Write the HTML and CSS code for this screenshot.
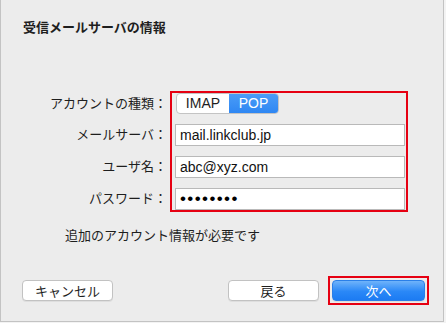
FILE: index.html
```html
<!DOCTYPE html>
<html lang="ja">
<head>
  <meta charset="UTF-8">
  <meta name="viewport" content="width=device-width, initial-scale=1.0">
  <title>受信メールサーバの情報</title>
  <link rel="stylesheet" href="styles.css">
</head>
<body>
  <div class="sheet">
    <h1 class="title">受信メールサーバの情報</h1>

    <div class="form">
      <div class="labels">
        <span class="label label--seg">アカウントの種類：</span>
        <span class="label">メールサーバ：</span>
        <span class="label">ユーザ名：</span>
        <span class="label">パスワード：</span>
      </div>
      <div class="fields">
        <div class="seg">
          <button class="seg__btn">IMAP</button>
          <button class="seg__btn seg__btn--on">POP</button>
        </div>
        <input class="field" type="text" value="mail.linkclub.jp" readonly>
        <input class="field" type="text" value="abc@xyz.com" readonly>
        <input class="field field--pw" type="text" value="••••••••" readonly>
      </div>
    </div>

    <p class="note">追加のアカウント情報が必要です</p>

    <div class="footer">
      <button class="btn">キャンセル</button>
      <button class="btn btn--back">戻る</button>
      <div class="mark">
        <button class="btn btn--primary">次へ</button>
      </div>
    </div>
  </div>
</body>
</html>
```

FILE: styles.css
```css
* { padding:0; margin:0; box-sizing:border-box; font-family:"Liberation Sans", "Noto Sans CJK JP", sans-serif; }

:root {
  --color-bg: #ececec;
  --color-line: #c3c3c3;
  --color-text: #1e1e1e;
  --color-red: #e60012;
  --color-blue: #3d93f5;
  --color-field-line: #b9b9b9;
}

body {
  background-color: #f3f3f3;
  color: var(--color-text);
}

.sheet {
  width: 444px;
  height: 322px;
  background-color: var(--color-bg);
  border: 1px solid var(--color-line);
  border-top: none;
  padding-top: 20px;
}

.title {
  font-size: 13px;
  font-weight: bold;
  line-height: 16px;
  padding-left: 22px;
}

.form {
  display: flex;
  margin-top: 55px;
}

.labels {
  width: 166px;
  display: flex;
  flex-direction: column;
  gap: 10px;
  padding-top: 2px;
  text-align: right;
}

.label {
  font-size: 13px;
  height: 22px;
  line-height: 22px;
}

.label--seg {
  height: 21px;
  line-height: 21px;
}

.fields {
  width: 238px;
  margin-left: 3px;
  border: 2px solid var(--color-red);
  padding: 0 1px 0 3px;
  display: flex;
  flex-direction: column;
  gap: 10px;
}

.seg {
  display: flex;
  margin-left: 1px;
  width: 103px;
  height: 21px;
  border: 1px solid #c4c4c4;
  border-radius: 4px;
  overflow: hidden;
  background-color: #fff;
}

.seg__btn {
  border: none;
  background: transparent;
  font-size: 14px;
  color: var(--color-text);
  width: 53px;
  line-height: 19px;
}

.seg__btn--on {
  width: 50px;
  color: #fff;
  background: linear-gradient(#4a9cf7, #2f87f3);
}

.field {
  width: 230px;
  height: 22px;
  border: 1px solid var(--color-field-line);
  background-color: #fff;
  font-size: 14px;
  padding: 0 4px;
  color: #111;
  outline: none;
}

.field--pw {
  letter-spacing: 1.4px;
  font-size: 17px;
  padding-left: 4px;
  color: #000;
}

.note {
  font-size: 13px;
  line-height: 16px;
  margin-top: 16px;
  padding-left: 64px;
}

.footer {
  display: flex;
  align-items: center;
  margin-top: 32px;
  padding: 0 14px 0 21px;
}

.btn {
  width: 91px;
  height: 21px;
  font-size: 13px;
  background-color: #fff;
  border: 1px solid #c2c2c2;
  border-radius: 4px;
  box-shadow: 0 1px 0 rgba(0, 0, 0, 0.06);
  color: var(--color-text);
}

.btn--back {
  margin-left: auto;
}

.mark {
  margin-left: 9px;
  border: 2px solid var(--color-red);
  padding: 2px;
}

.btn--primary {
  width: 93px;
  display: block;
  color: #fff;
  border-color: #2a7fe8;
  background: linear-gradient(#6fb3fa, #2a88f7 55%, #1c7bf3);
}
```
